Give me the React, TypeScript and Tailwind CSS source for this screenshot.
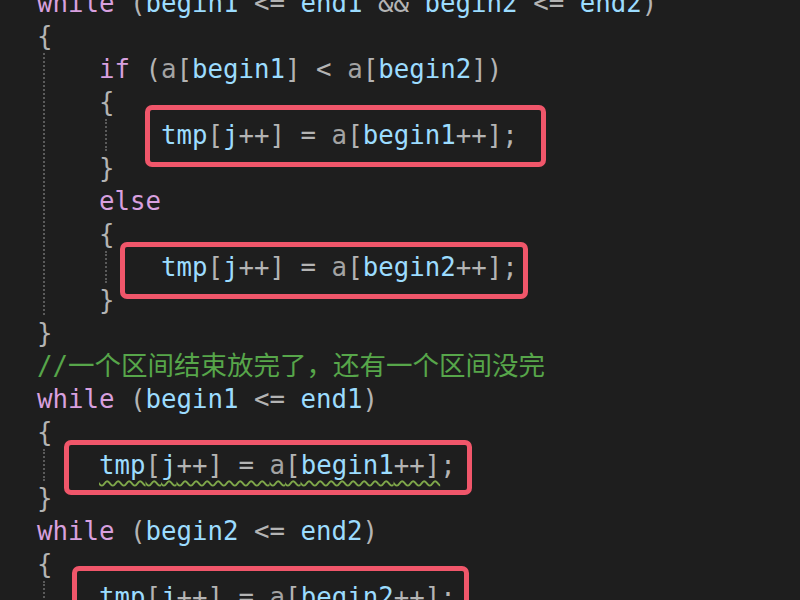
import React from "react";

const kw = "text-[#d8a0df]";
const id = "text-[#9cdcfe]";
const pm = "text-[#a3a3a3]";
const pu = "text-[#b4b4b4]";
const cm = "text-[#57a64a]";

function Assign({ n, wavy }: { n: string; wavy?: boolean }) {
  const body = (
    <>
      <span className={id}>tmp</span>
      <span className={pu}>[</span>
      <span className={id}>j</span>
      <span className={pu}>++] = </span>
      <span className={pm}>a</span>
      <span className={pu}>[</span>
      <span className={id}>begin{n}</span>
      <span className={pu}>++]</span>
    </>
  );
  return (
    <>
      {wavy ? (
        <span className="underline decoration-wavy decoration-[#7fa84a] decoration-[1.5px] underline-offset-[6px]">
          {body}
        </span>
      ) : (
        body
      )}
      <span className={pu}>;</span>
    </>
  );
}

function Line({ indent = 0, children }: { indent?: number; children?: React.ReactNode }) {
  return (
    <div className="h-[33px] flex items-center whitespace-pre">
      <span>{" ".repeat(indent * 4)}</span>
      {children}
    </div>
  );
}

function Box({ cls }: { cls: string }) {
  return <div className={"absolute border-[5px] border-[#f0566a] rounded-[7px] " + cls} />;
}

function Guide({ cls }: { cls: string }) {
  return <div className={"absolute w-0 border-l-2 border-dotted border-[#5a5a5a] " + cls} />;
}

export default function App() {
  return (
    <div className="relative w-[800px] h-[600px] overflow-hidden bg-[#1e1e1e] font-['DejaVu_Sans_Mono','Noto_Sans_CJK_SC',monospace] text-[25.75px]">
      <div className="mt-[-13.5px] pl-[37px]">
        <Line>
          <span className={kw}>while</span>
          <span className={pu}> (</span>
          <span className={id}>begin1</span>
          <span className={pu}> &lt;= </span>
          <span className={id}>end1</span>
          <span className={pu}> &amp;&amp; </span>
          <span className={id}>begin2</span>
          <span className={pu}> &lt;= </span>
          <span className={id}>end2</span>
          <span className={pu}>)</span>
        </Line>
        <Line><span className={pu}>{"{"}</span></Line>
        <Line indent={1}>
          <span className={kw}>if</span>
          <span className={pu}> (</span>
          <span className={pm}>a</span>
          <span className={pu}>[</span>
          <span className={id}>begin1</span>
          <span className={pu}>] &lt; </span>
          <span className={pm}>a</span>
          <span className={pu}>[</span>
          <span className={id}>begin2</span>
          <span className={pu}>])</span>
        </Line>
        <Line indent={1}><span className={pu}>{"{"}</span></Line>
        <Line indent={2}><Assign n="1" /></Line>
        <Line indent={1}><span className={pu}>{"}"}</span></Line>
        <Line indent={1}><span className={kw}>else</span></Line>
        <Line indent={1}><span className={pu}>{"{"}</span></Line>
        <Line indent={2}><Assign n="2" /></Line>
        <Line indent={1}><span className={pu}>{"}"}</span></Line>
        <Line><span className={pu}>{"}"}</span></Line>
        <Line>
          <span className={cm}>//</span>
          <span className={cm + " text-[26.5px]"}>一个区间结束放完了，还有一个区间没完</span>
        </Line>
        <Line>
          <span className={kw}>while</span>
          <span className={pu}> (</span>
          <span className={id}>begin1</span>
          <span className={pu}> &lt;= </span>
          <span className={id}>end1</span>
          <span className={pu}>)</span>
        </Line>
        <Line><span className={pu}>{"{"}</span></Line>
        <Line indent={1}><Assign n="1" wavy /></Line>
        <Line><span className={pu}>{"}"}</span></Line>
        <Line>
          <span className={kw}>while</span>
          <span className={pu}> (</span>
          <span className={id}>begin2</span>
          <span className={pu}> &lt;= </span>
          <span className={id}>end2</span>
          <span className={pu}>)</span>
        </Line>
        <Line><span className={pu}>{"{"}</span></Line>
        <Line indent={1}><Assign n="2" /></Line>
      </div>

      <Guide cls="left-[43px] top-[53px] h-[262px]" />
      <Guide cls="left-[105px] top-[119px] h-[32px]" />
      <Guide cls="left-[105px] top-[251px] h-[32px]" />
      <Guide cls="left-[43px] top-[449px] h-[32px]" />
      <Guide cls="left-[43px] top-[581px] h-[32px]" />

      <Box cls="left-[145px] top-[105px] w-[401px] h-[62px]" />
      <Box cls="left-[120px] top-[242px] w-[408px] h-[57px]" />
      <Box cls="left-[64px] top-[440px] w-[408px] h-[55px]" />
      <Box cls="left-[72px] top-[566px] w-[397px] h-[60px]" />
    </div>
  );
}
